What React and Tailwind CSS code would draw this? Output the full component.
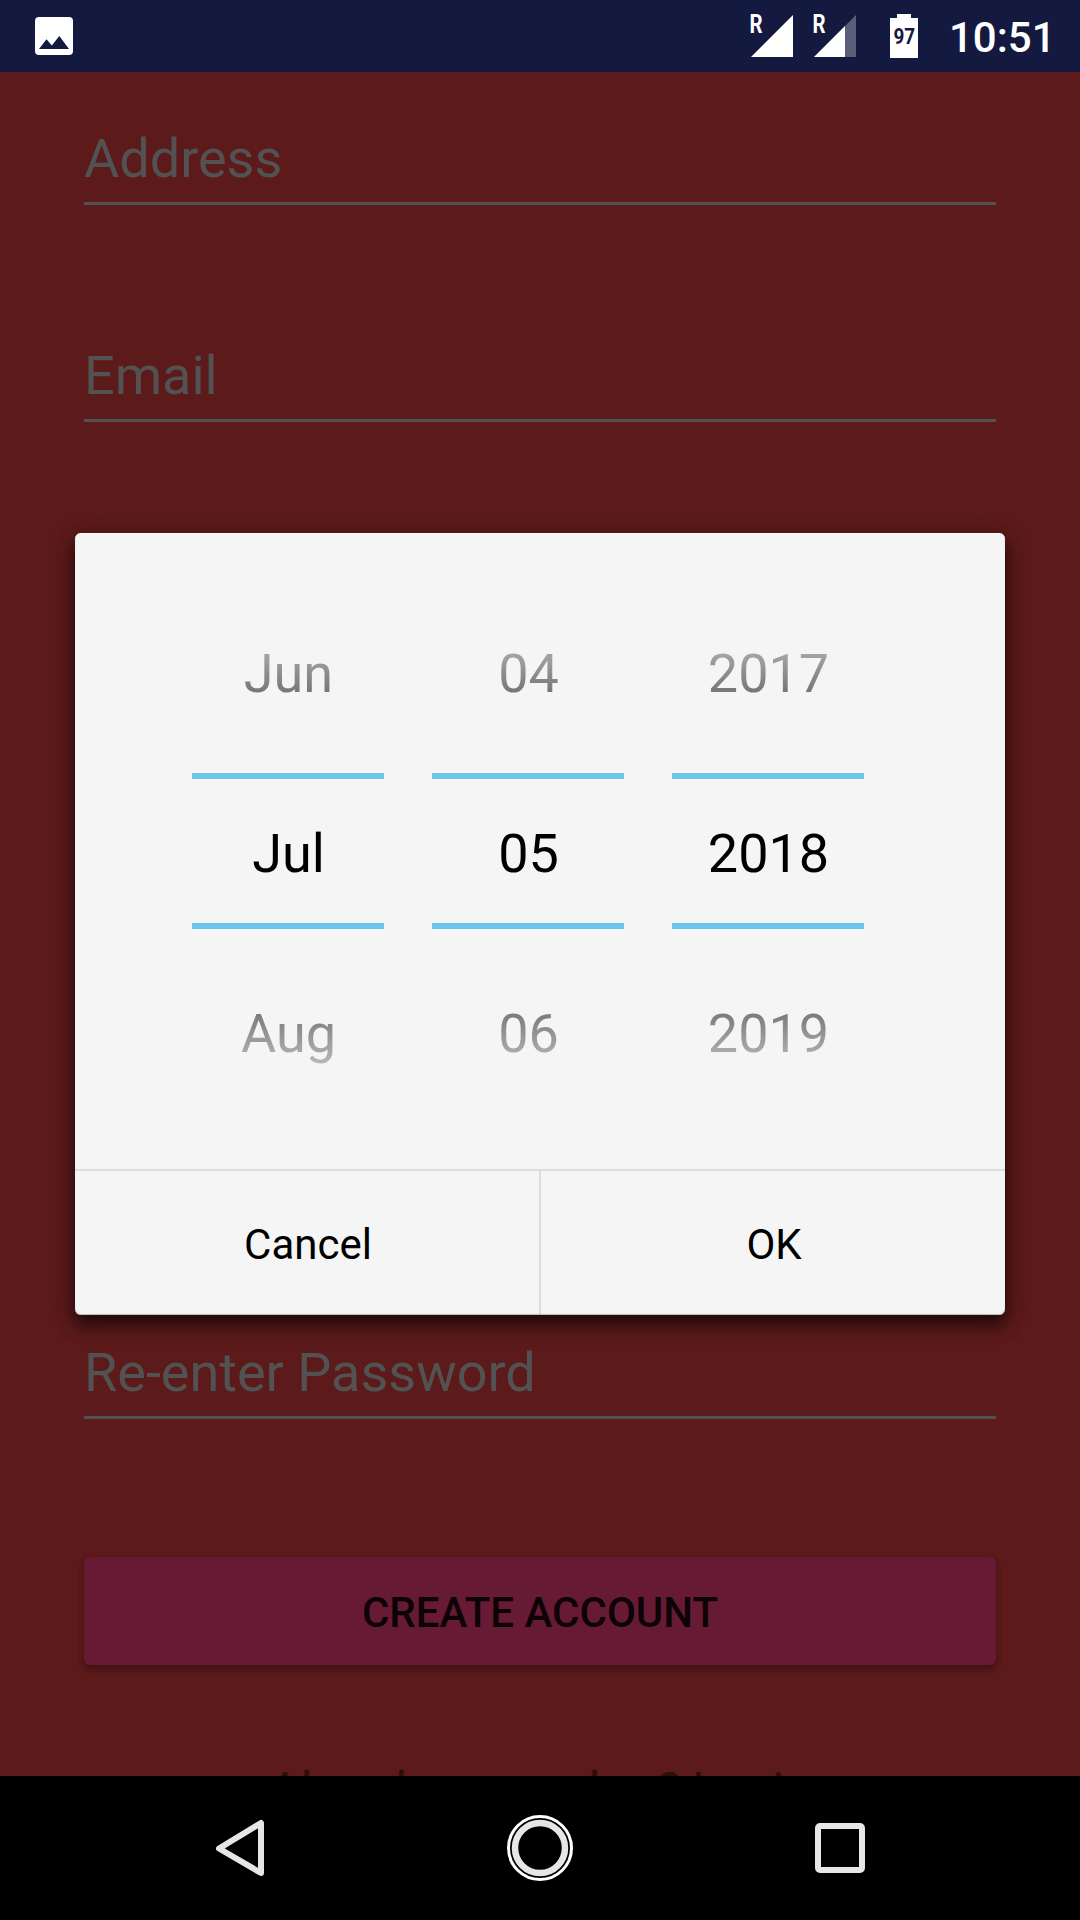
const columns = [
  ["Jun", "Jul", "Aug"],
  ["04", "05", "06"],
  ["2017", "2018", "2019"],
];

function Signal({ partial }) {
  return (
    <svg className="block h-[48px] w-[48px]" viewBox="0 0 48 48">
      <path d="M3 47 L45 5 V47 Z" fill="#fff" fillOpacity={partial ? 0.3 : 1} />
      {partial && <path d="M3 47 L34 16 V47 Z" fill="#fff" />}
      <text transform="translate(1.6 23.4) scale(0.8 1)" fill="#fff" fontSize="25.5" fontWeight="700">
        R
      </text>
    </svg>
  );
}

function StatusBar() {
  return (
    <header className="flex h-[72px] items-start bg-[#141940] text-white">
      <svg className="ml-[35px] mt-[17px] h-[38px] w-[38px]" viewBox="0 0 38 38">
        <rect width="38" height="38" rx="4" fill="#fff" />
        <path d="M4 32 L11.5 22.3 L16.8 28.6 L24.3 19 L34 32 Z" fill="#141940" />
      </svg>
      <div className="ml-[675px] mt-[10px] flex">
        <Signal />
        <div className="ml-[15px]">
          <Signal partial />
        </div>
      </div>
      <svg className="ml-[31px] mt-[14px] h-[44px] w-[28px]" viewBox="0 0 28 44">
        <path d="M7 0 H21 V4 H28 V44 H0 V4 H7 Z" fill="#fff" />
        <text transform="translate(14.3 30) scale(0.86 1)" fill="#141940" fontSize="22" fontWeight="700" textAnchor="middle">
          97
        </text>
      </svg>
      <span className="ml-[31px] mt-[13px] text-[42px] leading-[50px] font-medium whitespace-nowrap">10:51</span>
    </header>
  );
}

function Field({ label, className }) {
  return (
    <div className={`flex flex-col justify-end border-b-[3px] border-[#525252] ${className}`}>
      <span className="mb-[11px] text-[54px] leading-[64px] text-[#525252] whitespace-nowrap">{label}</span>
    </div>
  );
}

function PickerColumn({ values }) {
  return (
    <div className="flex h-[540px] w-[192px] flex-col text-center text-[54px] leading-[64px] text-black">
      <div className="flex h-[192px] items-center justify-center pb-[7px] pl-px [mask-image:linear-gradient(to_bottom,transparent_7px,black_209px)]">
        {values[0]}
      </div>
      <div className="h-[6px] bg-[#6cc6ea]" />
      <div className="flex h-[144px] items-center justify-center pt-[5px] pl-px">{values[1]}</div>
      <div className="h-[6px] bg-[#6cc6ea]" />
      <div className="flex h-[192px] items-center justify-center pt-[17px] pl-px [mask-image:linear-gradient(to_top,transparent_7px,black_209px)]">
        {values[2]}
      </div>
    </div>
  );
}

function DateDialog() {
  return (
    <div className="absolute left-[75px] top-[533px] flex h-[782px] w-[930px] flex-col overflow-hidden rounded-[6px] bg-[#f5f5f5]">
      <div className="flex gap-[48px] py-[48px] pl-[117px]">
        {columns.map((values) => (
          <PickerColumn key={values[0]} values={values} />
        ))}
      </div>
      <div className="flex h-[146px] border-t-2 border-[#dcdddc] text-[42px] leading-[50px] text-black">
        <button className="w-[464px] pt-[4px] pl-[2px]">Cancel</button>
        <div className="w-[2px] bg-[#dcdddc]" />
        <button className="w-[464px] pt-[4px] pl-[2px]">OK</button>
      </div>
    </div>
  );
}

function NavBar() {
  return (
    <nav className="flex h-[144px] items-center justify-between bg-black px-[204px]">
      <svg className="h-[72px] w-[72px]" viewBox="0 0 72 72" fill="none">
        <path d="M57 11 V61 L15 36.5 Z" stroke="#e6e6e6" strokeWidth="6" strokeLinejoin="round" />
      </svg>
      <svg className="h-[72px] w-[72px]" viewBox="0 0 72 72" fill="none">
        <circle cx="36" cy="36" r="31.5" stroke="#fff" strokeWidth="3" />
        <circle cx="36" cy="36" r="25" stroke="#e6e6e6" strokeWidth="6.5" />
      </svg>
      <svg className="h-[72px] w-[72px]" viewBox="0 0 72 72" fill="none">
        <rect x="14" y="14" width="44" height="44" rx="2" stroke="#e6e6e6" strokeWidth="6" />
      </svg>
    </nav>
  );
}

export default function App() {
  return (
    <div className="relative flex h-[1920px] w-[1080px] flex-col overflow-hidden bg-[#5c1a1a] font-['Roboto',sans-serif]">
      <StatusBar />
      <main className="flex h-[1704px] flex-col overflow-hidden px-[84px]">
        <Field label="Address" className="h-[133px] shrink-0" />
        <Field label="Email" className="h-[217px] shrink-0" />
        <Field label="Re-enter Password" className="mt-[780px] h-[217px] shrink-0" />
        <button className="mt-[138px] h-[108px] shrink-0 rounded-[6px] bg-[#661a33] pt-[4px] text-[42px] leading-[50px] font-medium text-[#0d0206] shadow-[0_6px_6px_rgba(0,0,0,0.2),0_1px_6px_rgba(0,0,0,0.1)]">
          CREATE ACCOUNT
        </button>
        <p className="mt-[97px] shrink-0 text-center text-[48px] leading-[56px] text-[#2e0d0d]">
          Already a member? Login
        </p>
      </main>
      <NavBar />
      <div className="absolute left-[75px] top-[533px] h-[782px] w-[930px] rounded-[6px] shadow-[0_10px_16px_rgba(0,0,0,0.5),0_6px_24px_rgba(0,0,0,0.32)]" />
      <DateDialog />
      <div className="pointer-events-none absolute left-[75px] top-[533px] h-[782px] w-[930px] rounded-[6px] shadow-[inset_0_-1px_1px_#b4bcb9,inset_0_1px_1px_#fcfcfc]" />
    </div>
  );
}
